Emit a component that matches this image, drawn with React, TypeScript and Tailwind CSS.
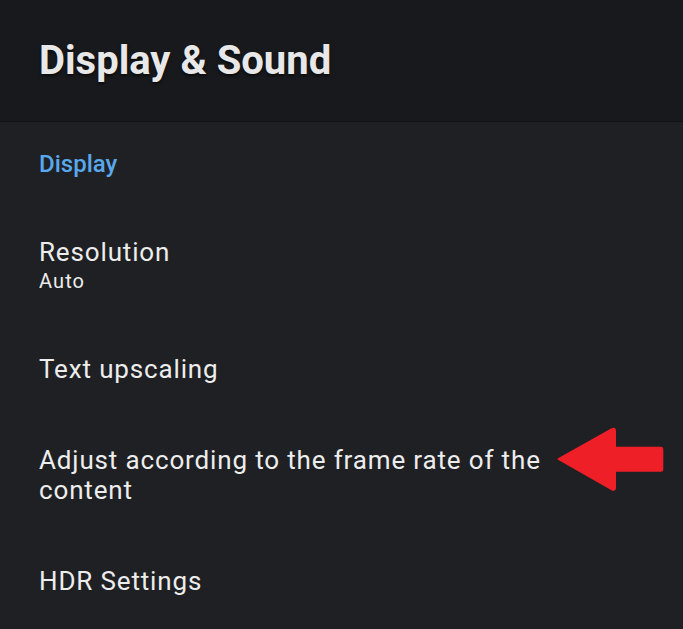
import React from 'react'

const ITEMS = [
  { title: 'Resolution', sub: 'Auto' },
  { title: 'Text upscaling' },
  { title: 'Adjust according to the frame rate of the content', arrow: true },
  { title: 'HDR Settings' },
]

function Arrow() {
  return (
    <svg width="110" height="69" viewBox="0 0 110 69" className="absolute left-[517px] top-[-20px]">
      <path
        d="M2.5 34 L56 4.2 Q59 2.7 59 6 L59 22.7 L105 22.7 Q106.3 22.7 106.3 24.5 L106.3 44 Q106.3 45.7 105 45.7 L59 45.7 L59 62.5 Q59 66 56 64.3 Z"
        fill="#ee1f27"
        stroke="#ee1f27"
        strokeWidth="2"
        strokeLinejoin="round"
      />
    </svg>
  )
}

export default function App() {
  return (
    <div className="w-[683px] h-[629px] overflow-hidden bg-[#1f2023] font-['Roboto',sans-serif] text-[#ededed]">
      {/* Header */}
      <header className="h-[122px] bg-[#18191c] border-b border-[#111214] px-[39px] flex items-center">
        <h1 className="text-[40px] font-bold text-[#e8e8e8] [text-shadow:0_2px_3px_rgba(0,0,0,0.6)]">
          Display &amp; Sound
        </h1>
      </header>

      <div className="px-[39px] pt-[28px]">
        <div className="text-[24px] font-medium text-[#5aa8ec] leading-[28px]">Display</div>

        <div className="flex flex-col mt-[59px] gap-[61px]">
          {ITEMS.map((it) => (
            <div key={it.title} className="relative">
              <div className="text-[26px] leading-[30px] tracking-[0.85px] w-[520px]">{it.title}</div>
              {it.sub && <div className="text-[20px] leading-[24px] tracking-[1.1px] mt-[2px]">{it.sub}</div>}
              {it.arrow && <Arrow />}
            </div>
          ))}
        </div>
      </div>
    </div>
  )
}
